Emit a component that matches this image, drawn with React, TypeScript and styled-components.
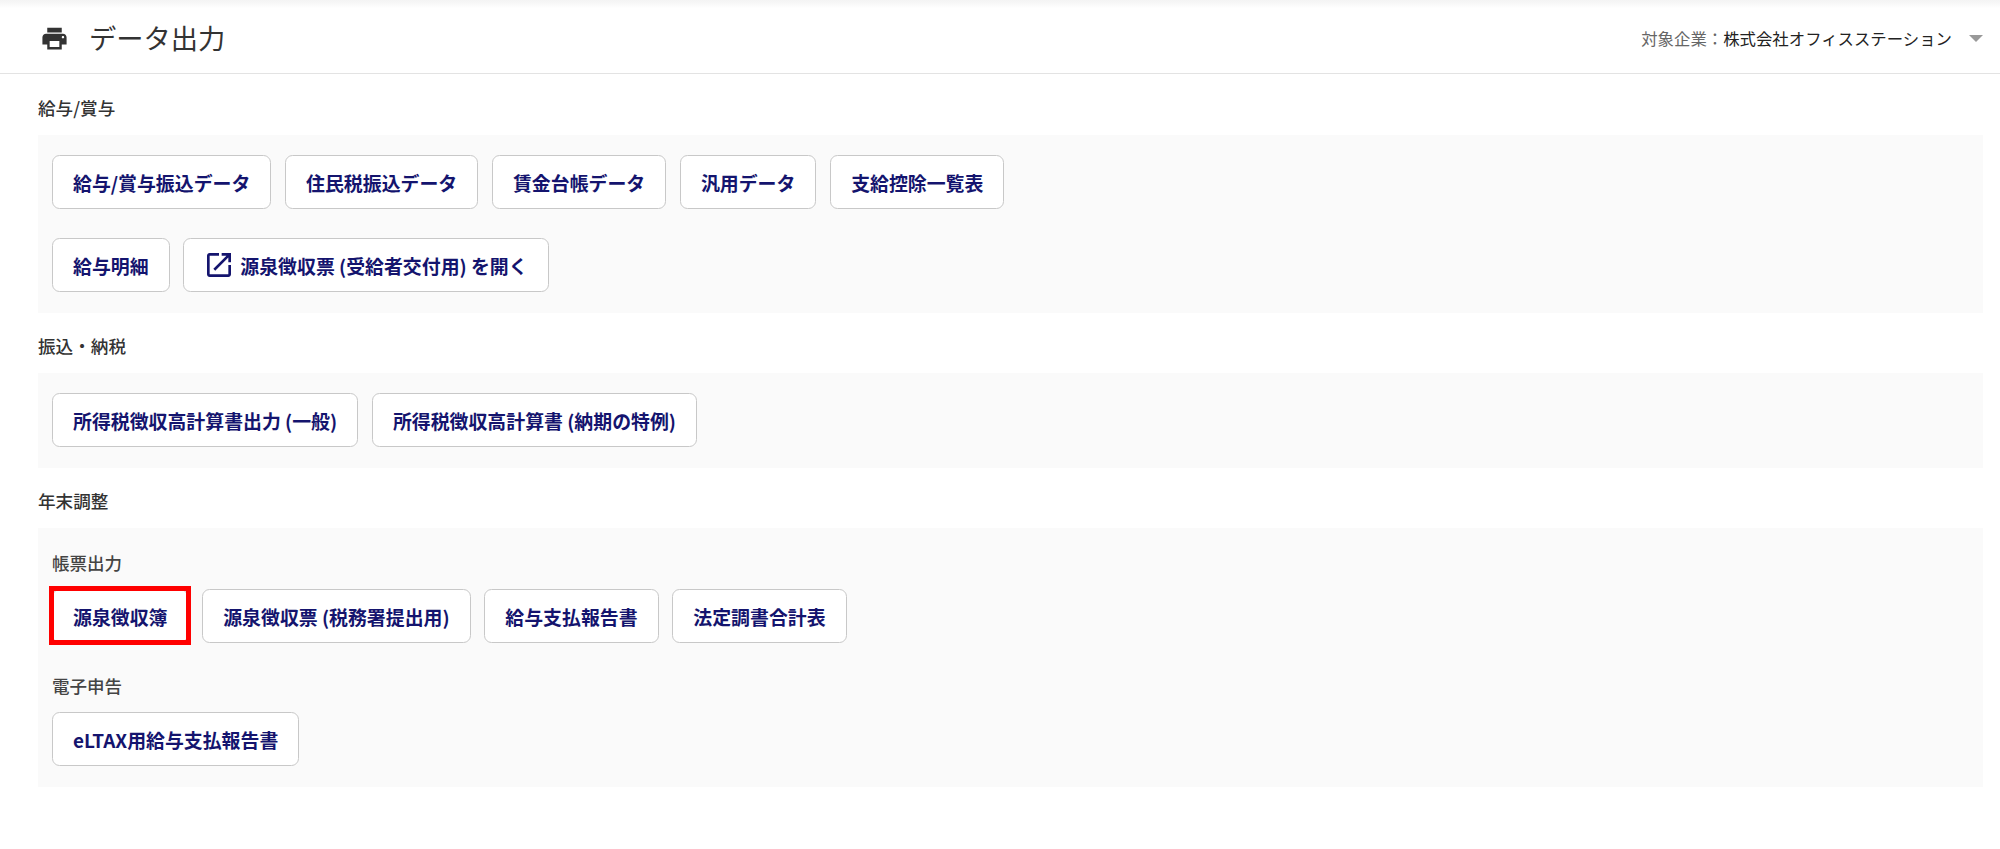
import styled, { createGlobalStyle } from 'styled-components'

const GlobalStyle = createGlobalStyle`
  body {
    margin: 0;
    background: #fff;
    font-family: 'Noto Sans CJK JP', 'Noto Sans', sans-serif;
  }
`

const Page = styled.div`
  min-height: 849px;
`

const Header = styled.header`
  display: flex;
  align-items: center;
  justify-content: space-between;
  box-sizing: border-box;
  height: 74px;
  padding: 3px 17px 0 40px;
  border-bottom: 1px solid #e3e3e3;
  background: linear-gradient(#f4f4f4 0, #f7f7f7 3px, #fff 8px);
`

const TitleBox = styled.div`
  display: flex;
  align-items: center;
  gap: 20px;
`

const Title = styled.h1`
  margin: 0;
  font-size: 27.25px;
  font-weight: 400;
  line-height: 1;
  color: #333;
`

const PrintIcon = styled.svg`
  width: 29px;
  height: 29px;
  fill: #333;
`

const Company = styled.div`
  display: flex;
  align-items: center;
  gap: 17px;
  font-size: 16.4px;
  color: #666;

  b {
    font-weight: 400;
    color: #222;
  }
`

const Caret = styled.span`
  width: 0;
  height: 0;
  border-left: 7px solid transparent;
  border-right: 7px solid transparent;
  border-top: 7px solid #999;
`

const Main = styled.main`
  padding: 1px 17px 0 38px;
`

const SectionTitle = styled.h2`
  display: flex;
  align-items: center;
  box-sizing: border-box;
  height: 60px;
  margin: 0;
  padding-top: 4px;
  font-size: 17.6px;
  font-weight: 500;
  color: #333;
`

const Panel = styled.section`
  display: flex;
  flex-direction: column;
  gap: 29px;
  padding: 20px 14px 21px;
  background: #fafafa;
`

const FormsPanel = styled(Panel)`
  gap: 0;
`

const SubTitle = styled.h3`
  display: flex;
  align-items: center;
  height: 28px;
  margin: 0 0 13px;
  font-size: 17.5px;
  font-weight: 500;
  color: #444;
`

const Row = styled.div<{ $spaced?: boolean }>`
  display: flex;
  gap: 13.75px;
  margin-bottom: ${({ $spaced }) => ($spaced ? '28px' : '0')};
`

const Button = styled.button<{ $marked?: boolean }>`
  position: relative;
  display: flex;
  align-items: center;
  gap: 5px;
  box-sizing: border-box;
  height: 54px;
  padding: 0 20px;
  border: 1.25px solid #c8c8c8;
  border-radius: 7.5px;
  background: #fff;
  font-family: inherit;
  font-size: 18.9px;
  font-weight: 700;
  white-space: nowrap;
  color: #14146e;

  ${({ $marked }) =>
    $marked &&
    `
    &::after {
      content: '';
      position: absolute;
      top: -4.25px;
      left: -4.25px;
      right: -3.25px;
      bottom: -3.25px;
      border: 5.7px solid #ff0000;
    }
  `}
`

const ExternalIcon = styled.svg`
  width: 32px;
  height: 32px;
  margin-left: -1px;
  fill: #14146e;
`

const groups: string[][] = [
  ['給与/賞与振込データ', '住民税振込データ', '賃金台帳データ', '汎用データ', '支給控除一覧表'],
  ['所得税徴収高計算書出力 (一般)', '所得税徴収高計算書 (納期の特例)'],
  ['源泉徴収票 (税務署提出用)', '給与支払報告書', '法定調書合計表'],
]

export default function App() {
  return (
    <Page>
      <GlobalStyle />
      <Header>
        <TitleBox>
          <PrintIcon viewBox='0 0 24 24'>
            <path d='M19 8H5c-1.66 0-3 1.34-3 3v6h4v4h12v-4h4v-6c0-1.66-1.34-3-3-3zm-3 11H8v-5h8v5zm3-7c-.55 0-1-.45-1-1s.45-1 1-1 1 .45 1 1-.45 1-1 1zm-1-9H6v4h12V3z' />
          </PrintIcon>
          <Title>データ出力</Title>
        </TitleBox>
        <Company>
          <span>
            対象企業：<b>株式会社オフィスステーション</b>
          </span>
          <Caret />
        </Company>
      </Header>
      <Main>
        <SectionTitle>給与/賞与</SectionTitle>
        <Panel>
          <Row>
            {groups[0].map((label) => (
              <Button key={label}>{label}</Button>
            ))}
          </Row>
          <Row>
            <Button>給与明細</Button>
            <Button>
              <ExternalIcon viewBox='0 0 24 24'>
                <path d='M19 19H5V5h7V3H5c-1.11 0-2 .9-2 2v14c0 1.1.89 2 2 2h14c1.1 0 2-.9 2-2v-7h-2v7zM14 3v2h3.59l-9.83 9.83 1.41 1.41L19 6.41V10h2V3h-7z' />
              </ExternalIcon>
              源泉徴収票 (受給者交付用) を開く
            </Button>
          </Row>
        </Panel>
        <SectionTitle>振込・納税</SectionTitle>
        <Panel>
          <Row>
            {groups[1].map((label) => (
              <Button key={label}>{label}</Button>
            ))}
          </Row>
        </Panel>
        <SectionTitle>年末調整</SectionTitle>
        <FormsPanel>
          <SubTitle>帳票出力</SubTitle>
          <Row $spaced>
            <Button $marked>源泉徴収簿</Button>
            {groups[2].map((label) => (
              <Button key={label}>{label}</Button>
            ))}
          </Row>
          <SubTitle>電子申告</SubTitle>
          <Row>
            <Button>eLTAX用給与支払報告書</Button>
          </Row>
        </FormsPanel>
      </Main>
    </Page>
  )
}
